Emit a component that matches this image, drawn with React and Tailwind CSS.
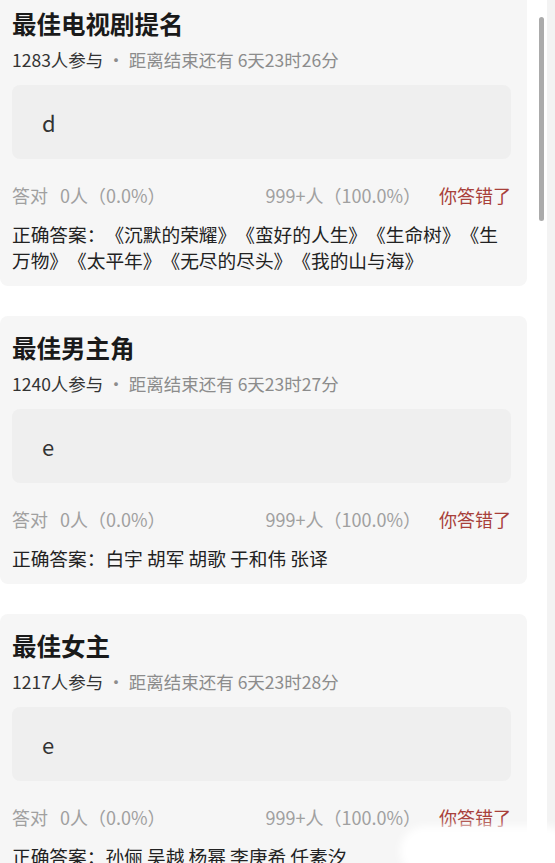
import React from 'react';

const polls = [
  {
    title: '最佳电视剧提名',
    count: '1283人参与',
    left: '6天23时26分',
    pick: 'd',
    answer: '《沉默的荣耀》《蛮好的人生》《生命树》《生万物》《太平年》《无尽的尽头》《我的山与海》',
  },
  {
    title: '最佳男主角',
    count: '1240人参与',
    left: '6天23时27分',
    pick: 'e',
    answer: '白宇 胡军 胡歌 于和伟 张译',
  },
  {
    title: '最佳女主',
    count: '1217人参与',
    left: '6天23时28分',
    pick: 'e',
    answer: '孙俪 吴越 杨幂 李庚希 任素汐',
  },
];

function PollCard({ poll }) {
  return (
    <div className="bg-[#f6f6f6] rounded-lg pl-3 pr-4 pt-4 pb-[13px]">
      <h2 className="text-[24.5px] leading-[32px] font-bold text-[#1a1a1a]">{poll.title}</h2>
      <p className="mt-2 text-[17.5px] leading-[24px] text-[#8c8c8c]">
        <span className="text-[#333]">{poll.count}</span> · 距离结束还有 {poll.left}
      </p>
      <div className="mt-[13px] h-[74px] rounded-lg bg-[#efefef] flex items-center pl-[30px]">
        <span className="text-[22px] text-[#333]">{poll.pick}</span>
      </div>
      <div className="mt-[23px] flex items-center justify-between text-[18px] leading-[26px] text-[#a0a0a0]">
        <span>
          答对<span className="ml-3">0人（0.0%）</span>
        </span>
        <span className="flex items-center gap-[18px]">
          <span>999+人（100.0%）</span>
          <span className="text-[#a8403a]">你答错了</span>
        </span>
      </div>
      <p className="mt-[13px] pr-2 text-[18.7px] leading-[26px] text-[#222]">
        正确答案：{poll.answer}
      </p>
    </div>
  );
}

export default function App() {
  return (
    <div
      className="relative h-[863px] w-[555px] overflow-hidden bg-white [text-spacing-trim:space-all]"
      style={{ fontFamily: '"Noto Sans CJK SC", "Noto Sans", sans-serif' }}
    >
      <div className="-mt-2 w-[527px] flex flex-col gap-[30px]">
        {polls.map((p) => (
          <PollCard key={p.title} poll={p} />
        ))}
      </div>
      {/* scrollbar */}
      <div className="absolute right-0 top-0 h-full w-[8px] bg-[#f3f3f3]" />
      <div className="absolute left-[539px] top-[17px] h-[204px] w-[5px] rounded-full bg-[#ababab]" />
      {/* smudge bottom right */}
      <div className="absolute left-[400px] top-[826px] h-[50px] w-[170px] rounded-full bg-white blur-[4px]" />
    </div>
  );
}
